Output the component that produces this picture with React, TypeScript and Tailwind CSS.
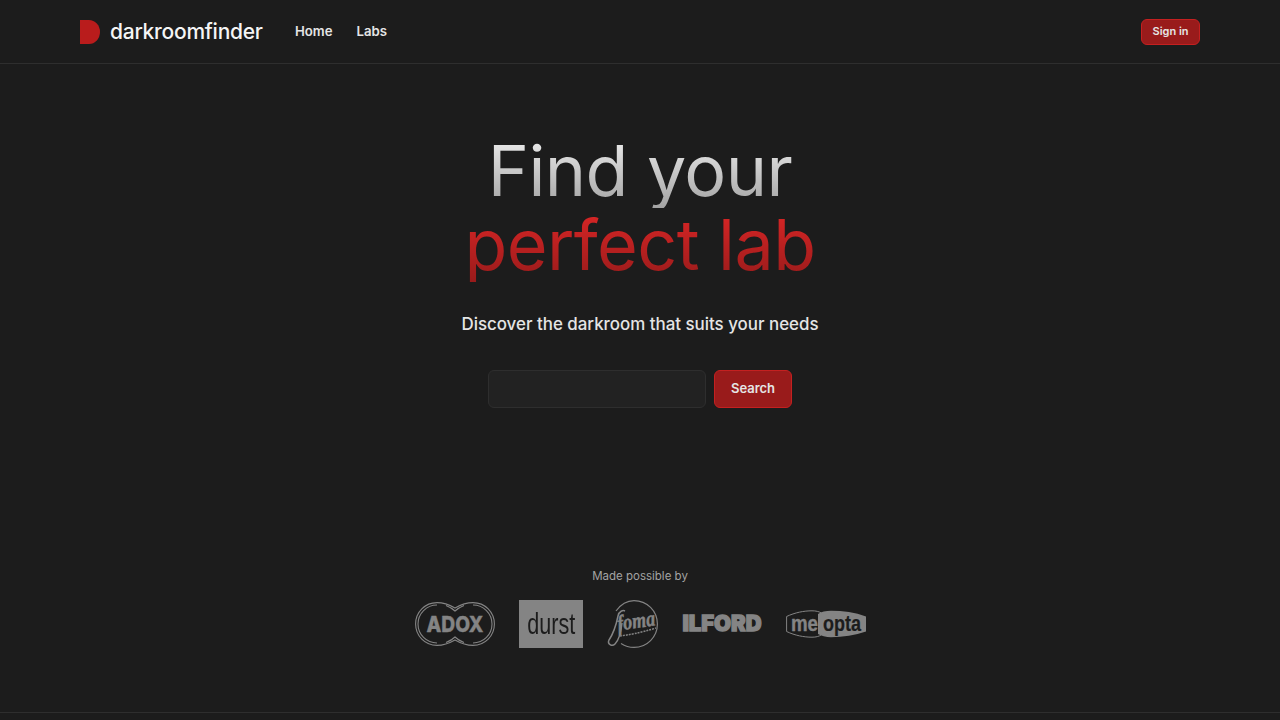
const F = "font-['Inter',sans-serif]";
const G = "#848484";

function Adox() {
  return (
    <svg className="overflow-visible" width="80" height="44" viewBox="0 0 80 44" fill="none" stroke={G} strokeWidth="1.1">
      <path d="M40 6C33 2 28 .6 22 .6 10 .6.6 10.200.6 22S10 43.400 22 43.400c6 0 11-1.400 18-5.400 7 4 12 5.400 18 5.400 12 0 21.400-9.600 21.400-21.400S70 .6 58 .6C52 .6 47 2 40 6Z" />
      <path d="M31 3.500C36 5.500 39 8 40 9c1-1 4-3.500 9-5.500M31 40.500C36 38.500 39 36 40 35c1 1 4 3.500 9 5.500M22 3C11.500 3 3 11.500 3 22s8.500 19 19 19M58 3c10.500 0 19 8.500 19 19s-8.500 19-19 19" />
      <text x="40" y="30" textAnchor="middle" textLength="57" lengthAdjust="spacingAndGlyphs" fontFamily="Inter" fontWeight="800" fontSize="22" fill={G} stroke={G} strokeWidth="0.4">ADOX</text>
    </svg>
  );
}

function Foma() {
  return (
    <svg className="overflow-visible" width="51" height="48" viewBox="0 0 51 48" fill="none" stroke={G} strokeWidth="1.200">
      <path d="M9 11C14 4 20 .6 27 .6c13 0 23.400 10.400 23.400 23.400S40 47.400 27 47.400c-5 0-9-1.400-13-4" />
      <text x="30" y="28" textAnchor="middle" textLength="38" lengthAdjust="spacingAndGlyphs" fontFamily="Liberation Serif" fontStyle="italic" fontWeight="700" fontSize="22" fill={G} stroke={G} strokeWidth="0.5" transform="rotate(-8 30 28)">foma</text>
      <path d="M13 36c8-1 20-3 36-8" strokeWidth="1.500" strokeDasharray="2 1" />
      <path d="M11 16C9 26 6 34 2 40c-2 4 3 7 6 4 4-4 6-12 7-21M11 16c1-5 5-6 7-5" strokeWidth="1.500" />
    </svg>
  );
}

function Ilford() {
  return (
    <svg className="overflow-visible" width="80" height="20" viewBox="0 0 80 20">
      <text x="40" y="17" textAnchor="middle" textLength="79" lengthAdjust="spacingAndGlyphs" fontFamily="Inter" fontWeight="900" fontSize="21" fill={G} stroke={G} strokeWidth="1.300">ILFORD</text>
    </svg>
  );
}

function Meopta() {
  return (
    <svg className="overflow-visible" width="80" height="28" viewBox="0 0 80 28">
      <path d="M.6 6.500C9 2.500 18 .8 26 .8c4 0 7 .8 9 2V25c-2 1.400-5 2.200-9 2.200-8 0-17-1.700-25.400-5.700Z" fill="none" stroke={G} strokeWidth="1" />
      <path d="M32 4c3-2 8-3.200 13-3.200 12 0 24 1.700 35 5.700v15c-11 4-23 5.700-35 5.700-5 0-10-1.200-13-3.200Z" fill={G} />
      <text x="5" y="20.500" textLength="27" lengthAdjust="spacingAndGlyphs" fontFamily="Liberation Sans" fontWeight="700" fontSize="22" fill={G} stroke={G} strokeWidth="0.4">me</text>
      <text x="37" y="20.500" textLength="38" lengthAdjust="spacingAndGlyphs" fontFamily="Liberation Sans" fontWeight="700" fontSize="22" fill="#1c1c1c" stroke="#1c1c1c" strokeWidth="0.2">opta</text>
    </svg>
  );
}

export default function App() {
  return (
    <div className={`h-[720px] flex flex-col bg-[#1c1c1c] overflow-hidden ${F}`}>
      <header className="h-[64px] shrink-0 border-b border-[#2e2e2e] px-20 flex items-center justify-between">
        <div className="flex items-center">
          <div className="flex items-center gap-[9px] w-[215px]">
            <svg width="21" height="24" viewBox="0 0 21 24"><path d="M0 0h9a11 12 0 0 1 0 24H0Z" fill="#b91c1c" /></svg>
            <span className="text-[21px] leading-none font-[450] text-[#f5f5f5] tracking-[-0.25px]">darkroomfinder</span>
          </div>
          <nav className="flex gap-6 text-[13.200px] font-semibold text-[#e5e5e5]">
            <span>Home</span>
            <span>Labs</span>
          </nav>
        </div>
        <button className="h-[26px] w-[59px] rounded-md bg-[#991b1b] border border-[#c42020] text-[#e5e5e5] text-[11px] font-semibold">Sign in</button>
      </header>
      <main className="flex-1 flex flex-col items-center">
        <h1 className="mt-[70px] text-center text-[70px] leading-[74px] font-[420] tracking-[-0.6px]">
          <span className="block bg-gradient-to-b from-[#f0f0f0] to-[#a3a3a3] bg-clip-text text-transparent">Find your</span>
          <span className="block bg-gradient-to-b from-[#dc2626] to-[#991b1b] bg-clip-text text-transparent">perfect lab</span>
        </h1>
        <p className="mt-[30px] text-[16.900px] leading-6 font-medium text-[#e5e5e5]">Discover the darkroom that suits your needs</p>
        <div className="mt-[34px] flex gap-2">
          <input className="w-[218px] h-[38px] rounded-md bg-[#222222] border border-[#2e2e2e]" />
          <button className="w-[78px] h-[38px] rounded-md bg-[#991b1b] border border-[#c42020] text-[#e5e5e5] text-[13px] font-semibold">Search</button>
        </div>
        <p className="mt-[160px] text-[11.500px] leading-4 text-[#a3a3a3]">Made possible by</p>
        <div className="mt-[16px] ml-px flex items-center gap-6">
          <Adox />
          <div className="w-[64px] h-[48px] bg-[#848484] flex items-center justify-center">
            <span className="text-[30px] leading-none text-[#1c1c1c] font-['Liberation_Sans'] scale-x-[0.72]">durst</span>
          </div>
          <Foma />
          <Ilford />
          <Meopta />
        </div>
      </main>
      <footer className="h-2 shrink-0 border-t border-[#2e2e2e]" />
    </div>
  );
}
